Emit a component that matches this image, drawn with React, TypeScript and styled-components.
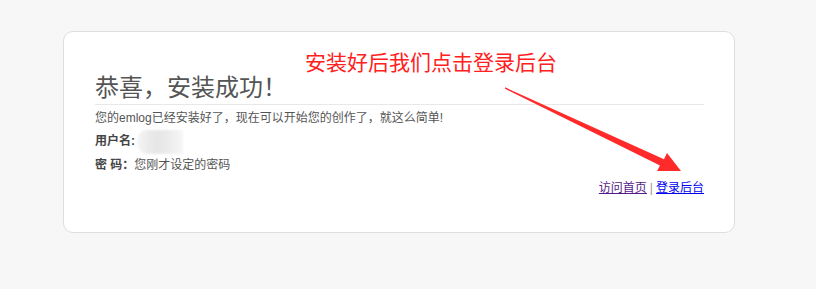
import styled, { createGlobalStyle } from "styled-components"

const Global = createGlobalStyle`
  html, body {
    margin: 0;
    padding: 0;
    background: #f7f7f7;
    font-family: "Liberation Sans", "Noto Sans CJK SC", sans-serif;
  }
`

const Page = styled.div`
  position: relative;
  width: 816px;
  height: 289px;
  padding: 31px 0 0 63px;
  box-sizing: border-box;
`

const Card = styled.div`
  width: 672px;
  height: 202px;
  box-sizing: border-box;
  background: #fff;
  border: 1px solid #dedede;
  border-radius: 10px;
  padding: 38px 30px 0 31px;
`

const Title = styled.h1`
  margin: 0;
  font-size: 24px;
  font-weight: normal;
  line-height: 32px;
  color: #555;
  padding-bottom: 2px;
  border-bottom: 1px solid #e8e8e8;
  font-family: "Noto Sans CJK SC", sans-serif;
`

const Body = styled.div`
  margin-top: 2px;
`

const Row = styled.p<{ right?: boolean }>`
  margin: 0;
  font-size: 12px;
  line-height: 23px;
  color: #555;
  text-align: ${({ right }) => (right ? "right" : "left")};
  font-family: "Liberation Sans", "Noto Sans CJK SC", sans-serif;
`

const Label = styled.b`
  font-weight: bold;
  color: #444;
`

const Redacted = styled.span`
  display: inline-block;
  vertical-align: middle;
  width: 46px;
  height: 24px;
  margin-left: 2px;
  border-radius: 10px 0 0 10px;
  background: linear-gradient(
    90deg,
    #f6f6f6 0%,
    #ebebeb 25%,
    #e6e6e8 45%,
    #ececec 70%,
    #f7f7f7 100%
  );
  filter: blur(1px);
`

const Link = styled.a<{ visited?: boolean }>`
  color: ${({ visited }) => (visited ? "#551a8b" : "#0000ee")};
  text-decoration: underline;
`

const Sep = styled.span`
  color: #999;
  margin: 0 3px;
`

const Note = styled.div`
  position: absolute;
  left: 305px;
  top: 48px;
  font-size: 21px;
  line-height: 26px;
  color: #ff2020;
  font-family: "Noto Sans CJK SC", sans-serif;
`

const Arrow = styled.svg`
  position: absolute;
  left: 0;
  top: 0;
  pointer-events: none;
`

const App = () => {
  return (
    <Page>
      <Global />
      <Card>
        <Title>恭喜，安装成功！</Title>
        <Body>
          <Row>您的emlog已经安装好了，现在可以开始您的创作了，就这么简单!</Row>
          <Row>
            <Label>用户名:</Label>
            <Redacted />
          </Row>
          <Row>
            <Label>密 码：</Label>您刚才设定的密码
          </Row>
          <Row right>
            <Link visited href="#">访问首页</Link>
            <Sep>|</Sep>
            <Link href="#">登录后台</Link>
          </Row>
        </Body>
      </Card>
      <Note>安装好后我们点击登录后台</Note>
      <Arrow width="816" height="289" viewBox="0 0 816 289">
        <polygon
          points="505,87.3 664,159.2 667,153 681,171 657,171 660,165.5 505,88.8"
          fill="#ff2a2a"
        />
      </Arrow>
    </Page>
  )
}

export default App
